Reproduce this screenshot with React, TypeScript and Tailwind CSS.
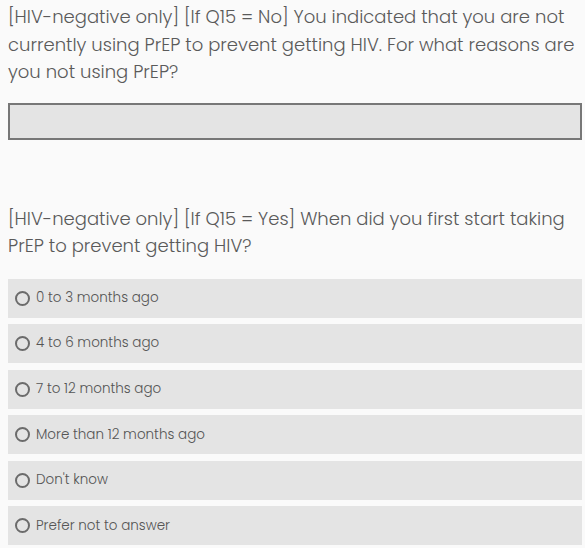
import React from "react"

const options = [
  "0 to 3 months ago",
  "4 to 6 months ago",
  "7 to 12 months ago",
  "More than 12 months ago",
  "Don't know",
  "Prefer not to answer",
]

const Radio = () => (
  <span className="block w-[15px] h-[15px] rounded-full border-2 border-[#6b6b6b] shrink-0" />
)

export default function App() {
  return (
    <div
      className="w-[585px] h-[548px] bg-[#fafafa] overflow-hidden px-2 pt-[3px] text-[#5a5a5a]"
      style={{ fontFamily: "Poppins, Inter, 'Open Sans', sans-serif" }}
    >
      <p className="text-[18px] leading-[27.5px] font-light">
        [HIV-negative only] [If Q15 = No] You indicated that you are not currently using PrEP to prevent getting HIV. For what reasons are you not using PrEP?
      </p>
      <div className="mt-[17px] h-[37px] w-[574px] border-2 border-[#777777] bg-[#e4e4e4]" />

      <p className="mt-[65px] text-[18px] leading-[27.5px] font-light">
        [HIV-negative only] [If Q15 = Yes] When did you first start taking PrEP to prevent getting HIV?
      </p>

      <div className="mt-[19px] flex flex-col gap-[6.6px] w-[574px]">
        {options.map((o) => (
          <div key={o} className="h-[39px] bg-[#e4e4e4] flex items-center gap-[6px] pl-[7px]">
            <Radio />
            <span className="text-[13.5px] font-light text-[#555555]">{o}</span>
          </div>
        ))}
      </div>
    </div>
  )
}
